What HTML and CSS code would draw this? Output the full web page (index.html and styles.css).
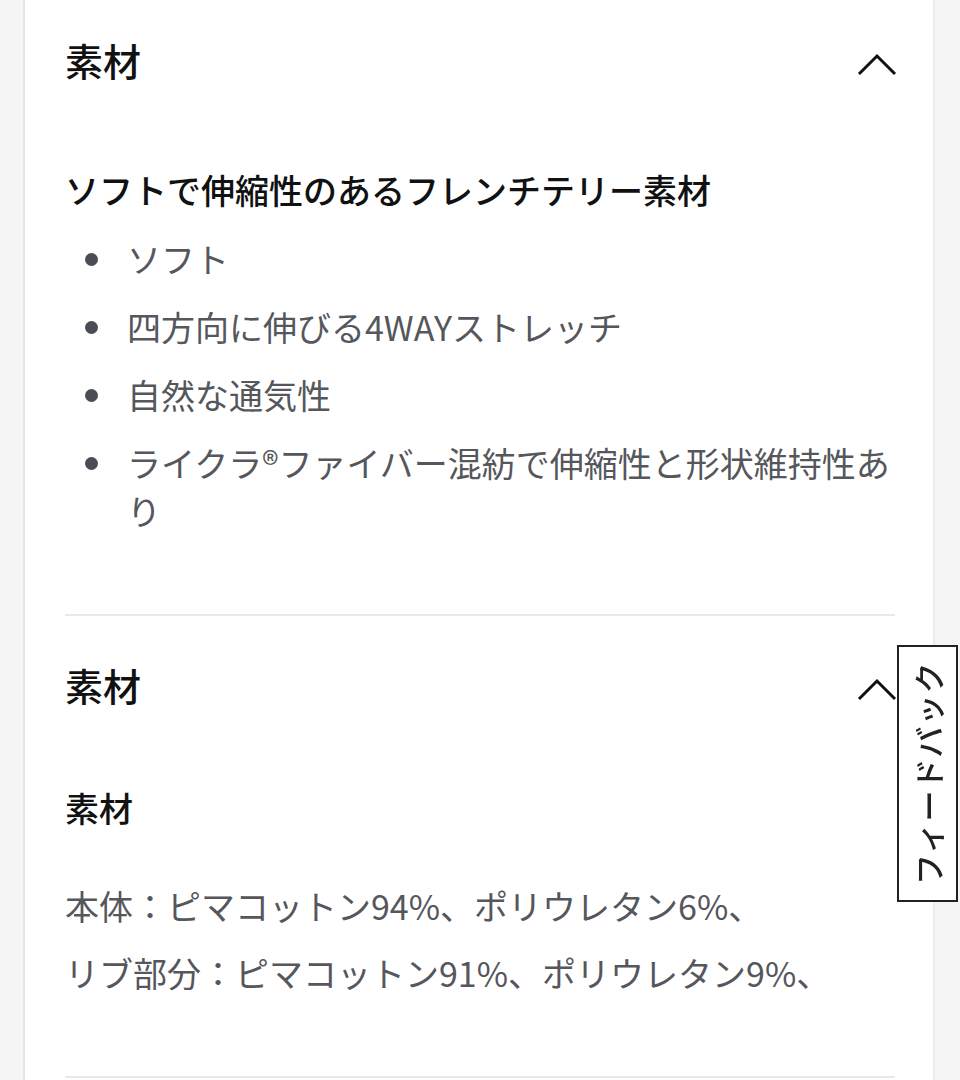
FILE: index.html
```html
<!DOCTYPE html>
<html lang="ja">
<head>
    <meta charset="UTF-8">
    <title>素材</title>
    <link rel="stylesheet" href="styles.css">
</head>
<body>
<div class="card">
    <section class="acc">
        <div class="accHead">
            <h2>素材</h2>
            <svg class="chev" width="40" height="24" viewBox="0 0 40 24"><polyline points="2,22 20,4 38,22" fill="none" stroke="#111" stroke-width="3"/></svg>
        </div>
        <div class="accBody">
            <h3>ソフトで伸縮性のあるフレンチテリー素材</h3>
            <ul class="points">
                <li>ソフト</li>
                <li>四方向に伸びる4WAYストレッチ</li>
                <li>自然な通気性</li>
                <li>ライクラ®ファイバー混紡で伸縮性と形状維持性あり</li>
            </ul>
        </div>
    </section>

    <section class="acc">
        <div class="accHead">
            <h2>素材</h2>
            <svg class="chev" width="40" height="24" viewBox="0 0 40 24"><polyline points="2,22 20,4 38,22" fill="none" stroke="#111" stroke-width="3"/></svg>
        </div>
        <div class="accBody">
            <h3 class="sub">素材</h3>
            <p class="line">本体：ピマコットン94%、ポリウレタン6%、</p>
            <p class="line">リブ部分：ピマコットン91%、ポリウレタン9%、</p>
        </div>
    </section>
</div>

<div class="feedback">フィードバック</div>
</body>
</html>
```

FILE: styles.css
```css
* {
    margin: 0;
    padding: 0;
    box-sizing: border-box;
}

html, body {
    background: #f5f5f5;
    font-family: "Noto Sans CJK JP", "Noto Sans", sans-serif;
    color: #111;
    overflow: hidden;
}

.card {
    margin: -9px 0 0 23px;
    width: 912px;
    min-height: 1200px;
    padding: 0 38px 0 40px;
    background: #fff;
    border-left: 2px solid #e6e6e6;
    border-right: 2px solid #ececec;
}

.acc {
    border-bottom: 2px solid #e8e8e8;
    padding-bottom: 79px;
}

.accHead {
    display: flex;
    align-items: center;
    justify-content: space-between;
    height: 144px;
}

.accHead h2 {
    font-size: 38px;
    font-weight: 500;
    line-height: 1;
    margin-bottom: 7px;
}

.chev {
    display: block;
    margin-top: 2px;
    margin-right: -2px;
}

.accBody {
    padding-top: 31px;
}

.accBody h3 {
    font-size: 34px;
    font-weight: 500;
    line-height: 48px;
}

.points {
    list-style: none;
    margin-top: 21px;
}

.points li {
    position: relative;
    padding-left: 62px;
    font-size: 34px;
    line-height: 48px;
    color: #55575c;
    margin-bottom: 20px;
}

.points li:last-child {
    margin-bottom: 0;
}

.points li::before {
    content: "";
    position: absolute;
    left: 20px;
    top: 18px;
    width: 13px;
    height: 13px;
    border-radius: 50%;
    background: #4a4d55;
}

.acc + .acc .accBody {
    padding-top: 24px;
}

.sub {
    margin-bottom: 50px;
}

.line {
    font-size: 34px;
    line-height: 48px;
    color: #55575c;
    margin-bottom: 19px;
}

.line:last-child {
    margin-bottom: 0;
}

.feedback {
    position: fixed;
    top: 645px;
    right: 2px;
    width: 61px;
    height: 257px;
    border: 2px solid #222;
    background: #fff;
    display: flex;
    align-items: center;
    justify-content: center;
    writing-mode: vertical-rl;
    text-orientation: sideways;
    transform: rotate(180deg);
    font-size: 31px;
    font-weight: 500;
    color: #222;
    letter-spacing: 1px;
}
```
